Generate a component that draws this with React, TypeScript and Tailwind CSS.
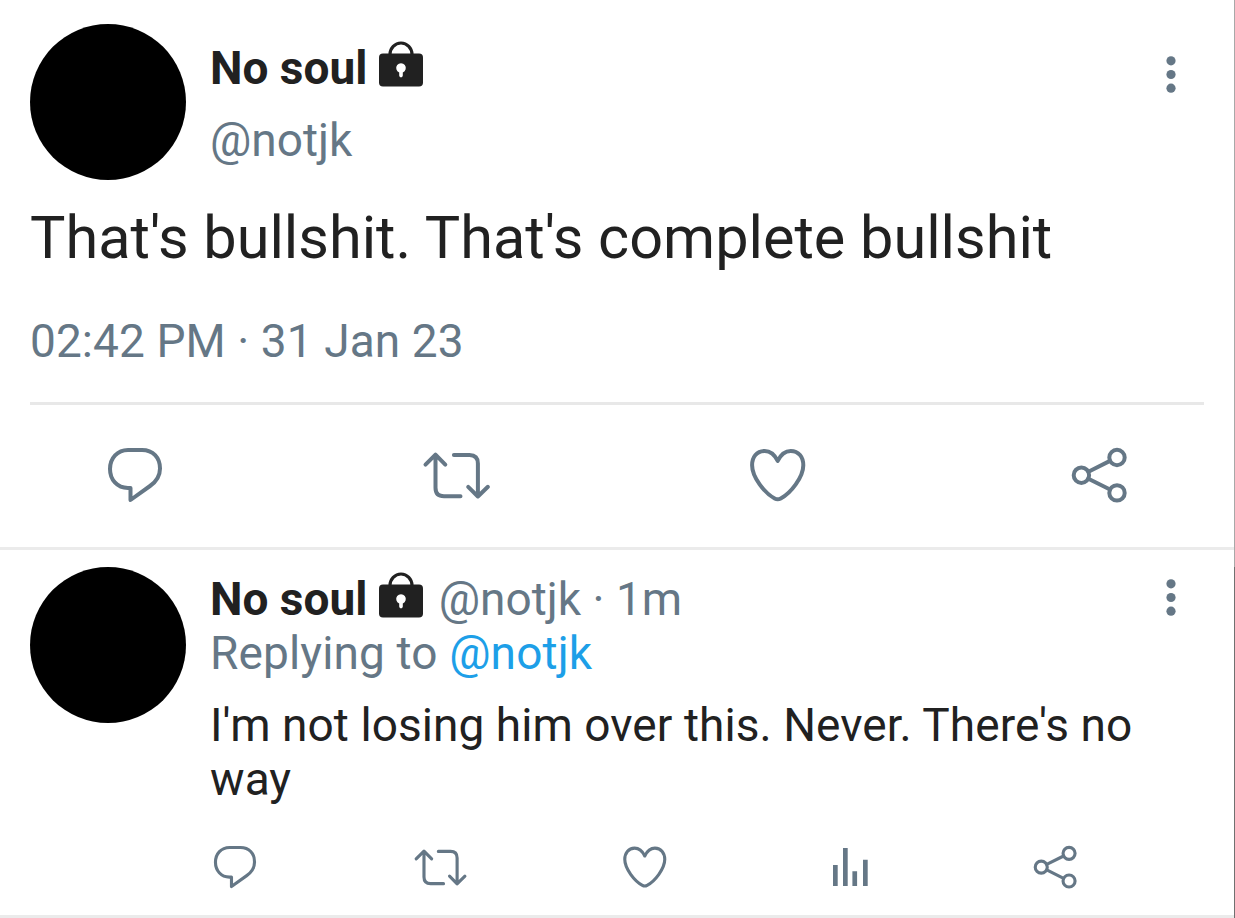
import type { ReactNode } from "react";
import clsx from "clsx";

type IconProps = { className?: string };

function Icon({ className, children }: IconProps & { children: ReactNode }) {
  return (
    <svg
      viewBox="0 0 64 64"
      className={clsx("shrink-0", className)}
      fill="none"
      stroke="currentColor"
      strokeWidth={4}
      strokeLinecap="round"
      strokeLinejoin="round"
    >
      {children}
    </svg>
  );
}

const ReplyIcon = ({ className }: IconProps) => (
  <Icon className={className}>
    <path d="M25 7H39C50 7 57 14.5 57 25.5C57 33 53.5 38.5 47 43L27.5 57V45H25C14 45 7 36.5 7 26C7 15 14.5 7 25 7Z" />
  </Icon>
);

const RetweetIcon = ({ className }: IconProps) => (
  <Icon className={className}>
    <path d="M1.5 21.6L11.5 11.6L21.3 21.6M11.5 11.8V44.8Q11.5 53.3 20 53.3H36.5" />
    <path d="M29.9 12H45.5Q53.9 12 53.9 20.5V53.3M44.2 43.8L53.9 53.5L63.9 43.8" />
  </Icon>
);

const LikeIcon = ({ className }: IconProps) => (
  <Icon className={className}>
    <path d="M31.7 17.9C28.7 11.7 24.2 7.9 18.7 7.9C10.7 7.9 6.1 14.2 6.1 22.2C6.1 34.2 18.7 50.2 28.7 55.5Q31.7 57.2 34.7 55.5C44.7 50.2 57.3 34.2 57.3 22.2C57.3 14.2 52.7 7.9 44.7 7.9C39.2 7.9 34.7 11.7 31.7 17.9Z" />
  </Icon>
);

const StatsIcon = ({ className }: IconProps) => (
  <svg viewBox="0 0 50 50" className={clsx("shrink-0", className)} fill="currentColor">
    <path d="M8 23h4.7v21H8zM18 6h4.7v38H18zM27.4 29.3h4.7V44h-4.7zM38 17.7h4.7V44H38z" />
  </svg>
);

const ShareIcon = ({ className }: IconProps) => (
  <Icon className={className}>
    <circle cx="14.4" cy="32.2" r="7.7" />
    <circle cx="50" cy="14.5" r="7.7" />
    <circle cx="50" cy="49.9" r="7.7" />
    <path d="M21.4 28.7L43 17.9M21.4 35.7L43 46.5" />
  </Icon>
);

const LockIcon = () => (
  <svg viewBox="0 0 44 46" className="h-[46px] w-[44px] shrink-0 text-[#212121]">
    <path d="M11 15V13.3a11 11.3 0 0 1 22 0V15" fill="none" stroke="currentColor" strokeWidth="3.2" />
    <rect y="12.6" width="44" height="32.8" rx="4" fill="currentColor" />
    <path d="M20.2 31.4a4.8 4.8 0 1 1 3.6 0V34.6a1.8 1.8 0 0 1-3.6 0z" fill="#fff" />
  </svg>
);

const MoreIcon = () => (
  <svg viewBox="0 0 10 37" className="h-[37px] w-[10px] shrink-0" fill="currentColor">
    <circle cx="5" cy="4.8" r="4.6" />
    <circle cx="5" cy="18.5" r="4.6" />
    <circle cx="5" cy="32.2" r="4.6" />
  </svg>
);

const Avatar = () => <div className="size-[156px] shrink-0 rounded-full bg-black" />;

const Name = () => (
  <>
    <span className="text-[46px] font-bold text-[#212121]">No soul</span>
    <div className="-mt-2 ml-[11.4px]">
      <LockIcon />
    </div>
  </>
);

export default function App() {
  return (
    <div className="flex h-[918px] w-[1235px] overflow-hidden bg-white font-[Roboto,sans-serif] text-[#657786]">
      <main className="flex w-[1234px] shrink-0 flex-col">
        <article className="flex h-[547px] shrink-0 flex-col px-[30px] pt-6">
          <header className="flex h-[156px]">
            <Avatar />
            <div className="ml-6 flex flex-1 flex-col">
              <div className="mt-[17px] flex h-[54px] items-center">
                <Name />
              </div>
              <div className="mt-[18px] text-[46px] leading-[54px]">@notjk</div>
            </div>
            <div className="mr-7 mt-[32.4px]">
              <MoreIcon />
            </div>
          </header>
          <p className="mt-[23px] h-[70px] text-[59.4px] leading-[70px] whitespace-nowrap text-[#212121]">
            That's bullshit. That's complete bullshit
          </p>
          <p className="mt-[41px] text-[46px] leading-[54px] tracking-[0.08px] whitespace-nowrap">
            02:42 PM · 31 Jan 23
          </p>
          <div className="mt-[34px] h-[3px] shrink-0 bg-[#e8e8e8]" />
          <div className="mt-[38px] flex justify-between px-[73px]">
            <ReplyIcon className="size-16" />
            <RetweetIcon className="size-16 overflow-visible" />
            <LikeIcon className="size-16" />
            <ShareIcon className="size-16" />
          </div>
        </article>

        <div className="h-[3px] shrink-0 bg-[#ebebeb]" />

        <article className="flex h-[365px] shrink-0 pt-[17px] pl-[30px]">
          <Avatar />
          <div className="ml-6 flex flex-1 flex-col">
            <div className="flex h-[54px] items-center pt-[10px]">
              <Name />
              <span className="ml-4 text-[46px]">@notjk · 1m</span>
            </div>
            <div className="mt-[5px] text-[46px] leading-[54px] tracking-[0.13px]">
              Replying to <span className="text-[#1d9fe8]">@notjk</span>
            </div>
            <p className="mt-[18px] w-[960px] text-[46px] leading-[54px] tracking-[0.06px] text-[#212121]">
              I'm not losing him over this. Never. There's no way
            </p>
            <div className="mt-9 flex w-[870px] justify-between">
              <ReplyIcon className="size-[50px]" />
              <RetweetIcon className="size-[50px] overflow-visible" />
              <LikeIcon className="size-[50px]" />
              <StatsIcon className="size-[50px]" />
              <ShareIcon className="size-[50px]" />
            </div>
          </div>
          <div className="mr-[58px] -ml-10 mt-3">
            <MoreIcon />
          </div>
        </article>

        <div className="h-[3px] shrink-0 bg-[#ebebeb]" />
      </main>
      <div className="flex w-px flex-col">
        <div className="h-[567px] bg-[#a8a8a8]" />
        <div className="flex-1 bg-[#707070]" />
      </div>
    </div>
  );
}
